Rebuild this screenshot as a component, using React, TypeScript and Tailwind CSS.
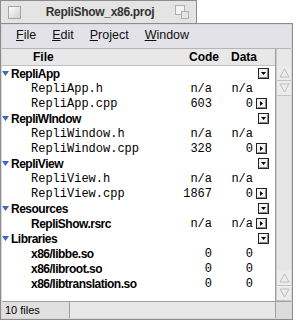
import React from "react"

type Row =
  | { kind: "group"; name: string }
  | { kind: "file"; name: string; mono: boolean; code: string; data: string; arrow?: boolean }

const rows: Row[] = [
  { kind: "group", name: "RepliApp" },
  { kind: "file", name: "RepliApp.h", mono: true, code: "n/a", data: "n/a" },
  { kind: "file", name: "RepliApp.cpp", mono: true, code: "603", data: "0", arrow: true },
  { kind: "group", name: "RepliWIndow" },
  { kind: "file", name: "RepliWindow.h", mono: true, code: "n/a", data: "n/a" },
  { kind: "file", name: "RepliWindow.cpp", mono: true, code: "328", data: "0", arrow: true },
  { kind: "group", name: "RepliView" },
  { kind: "file", name: "RepliView.h", mono: true, code: "n/a", data: "n/a" },
  { kind: "file", name: "RepliView.cpp", mono: true, code: "1867", data: "0", arrow: true },
  { kind: "group", name: "Resources" },
  { kind: "file", name: "RepliShow.rsrc", mono: false, code: "n/a", data: "n/a", arrow: true },
  { kind: "group", name: "Libraries" },
  { kind: "file", name: "x86/libbe.so", mono: false, code: "0", data: "0" },
  { kind: "file", name: "x86/libroot.so", mono: false, code: "0", data: "0" },
  { kind: "file", name: "x86/libtranslation.so", mono: false, code: "0", data: "0" },
]

function BoxIcon({ dir }: { dir: "down" | "right" }) {
  return (
    <svg width="11" height="11" viewBox="0 0 11 11">
      <rect x="0.5" y="0.5" width="10" height="10" fill="#f4f4f4" stroke="#222" />
      <line x1="1.5" y1="9.5" x2="9.5" y2="9.5" stroke="#888" />
      <line x1="9.5" y1="1.5" x2="9.5" y2="9.5" stroke="#888" />
      {dir === "down" ? (
        <polygon points="3,4 8,4 5.5,7" fill="#000" />
      ) : (
        <polygon points="4,3 4,8 7,5.5" fill="#000" />
      )}
    </svg>
  )
}

function Arrow({ up }: { up: boolean }) {
  return (
    <div className="h-[15px] w-full flex items-center justify-center border-b border-[#c4c4c4] bg-[#ececec]">
      <svg width="11" height="10" viewBox="0 0 11 10">
        {up ? (
          <polygon points="5.5,1 10,9 1,9" fill="none" stroke="#bdbdbd" />
        ) : (
          <polygon points="1,1 10,1 5.5,9" fill="none" stroke="#bdbdbd" />
        )}
      </svg>
    </div>
  )
}

export default function App() {
  const sans = "font-['Liberation_Sans',Arial,sans-serif]"
  const mono = "font-['Liberation_Mono','Courier_New',monospace]"
  return (
    <div className={`w-[298px] h-[329px] bg-white ${sans} text-black`}>
      {/* Tab */}
      <div className="w-[197px] h-[23px] bg-[#e4e4e4] border border-b-0 border-[#8c8c8c] flex items-center px-[7px]">
        <div className="w-[13px] h-[13px] border border-[#a4a4a4] bg-gradient-to-br from-[#ffffff] to-[#cfcfcf]" />
        <div className="flex-1 text-center font-bold text-[12px] tracking-[-0.3px] text-[#333] pl-[4px]">
          RepliShow_x86.proj
        </div>
        <div className="w-[14px] h-[14px] relative">
          <div className="absolute left-0 top-0 w-[10px] h-[10px] border border-[#b0b0b0] bg-[#f2f2f2]" />
          <div className="absolute right-0 bottom-0 w-[8px] h-[8px] border border-[#b0b0b0] bg-[#e6e6e6]" />
        </div>
      </div>

      {/* Window */}
      <div className="w-[293px] h-[297px] border border-[#8c8c8c] bg-[#d8d8d8] flex flex-col p-[1px]">
        {/* Menu bar */}
        <div className="h-[24px] bg-[#e2e2e8] border-b border-[#b4b4b8] flex items-end pb-[3px] text-[12.5px] text-[#111] pl-[14px] gap-[16px]">
          <span><span className="underline">F</span>ile</span>
          <span><span className="underline">E</span>dit</span>
          <span><span className="underline">P</span>roject</span>
          <span><span className="underline">W</span>indow</span>
        </div>

        <div className="flex flex-1 min-h-0">
          {/* List */}
          <div className="flex-1 flex flex-col bg-white border-r border-[#a0a0a0]">
            <div className="h-[17px] bg-[#e8e8e8] border-b border-[#c0c0c0] flex items-center text-[12px] font-bold">
              <span className="ml-[31px] w-[150px]">File</span>
              <span className="ml-[6px]">Code</span>
              <span className="ml-[12px]">Data</span>
            </div>
            {rows.map((r, i) => (
              <div key={i} className="h-[15px] flex items-center">
                {r.kind === "group" ? (
                  <>
                    <svg width="7" height="6" viewBox="0 0 7 6" className="ml-[0px] mr-[2px]">
                      <polygon points="0,0 7,0 3.5,5" fill="#3a67c8" />
                    </svg>
                    <span className="font-bold text-[12px] tracking-[-0.5px] w-[247px]">{r.name}</span>
                    <BoxIcon dir="down" />
                  </>
                ) : (
                  <>
                    <span
                      className={`ml-[29px] w-[150px] ${
                        r.mono ? `${mono} text-[12px]` : "font-bold text-[12px] tracking-[-0.5px]"
                      }`}
                    >
                      {r.name}
                    </span>
                    <span className={`${mono} text-[12px] w-[31px] text-right`}>{r.code}</span>
                    <span className={`${mono} text-[12px] w-[41px] text-right`}>{r.data}</span>
                    <span className="ml-[3px] w-[11px] flex">{r.arrow ? <BoxIcon dir="right" /> : null}</span>
                  </>
                )}
              </div>
            ))}
          </div>

          {/* Scrollbar */}
          <div className="w-[15px] flex flex-col bg-[#e4e4e4] border-l border-[#c8c8c8]">
            <div className="h-[17px] bg-[#e8e8e8]" />
            <Arrow up />
            <Arrow up={false} />
            <div className="flex-1 bg-[#e6e6e6]" />
            <Arrow up />
            <Arrow up={false} />
          </div>
        </div>

        {/* Status bar */}
        <div className="h-[17px] flex border-t border-[#a0a0a0]">
          <div className="w-[68px] bg-[#e0e0e0] border-r border-[#9a9a9a] text-[11px] flex items-center pl-[3px]">
            10 files
          </div>
          <div className="flex-1 bg-[#e8e8e8] border-r border-[#a0a0a0]" />
          <div className="w-[15px] bg-[#dcdcdc]" />
        </div>
      </div>
    </div>
  )
}
